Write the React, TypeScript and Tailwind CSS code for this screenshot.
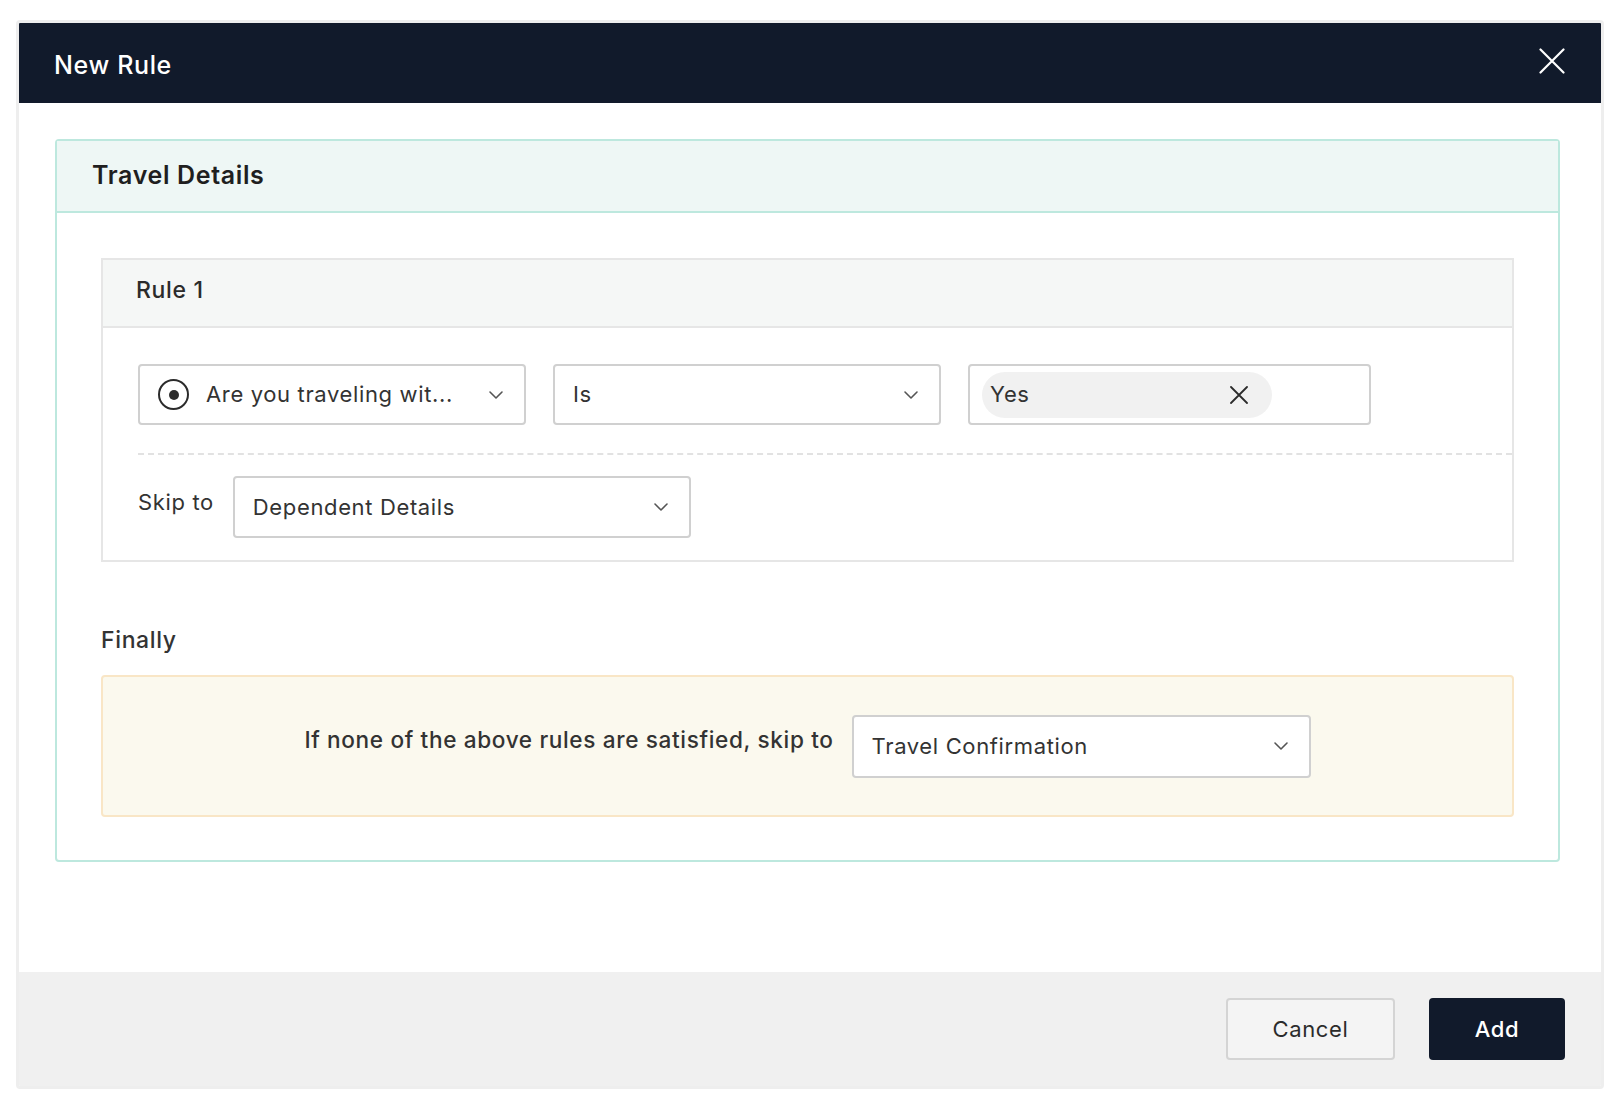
import React from 'react';

const Chevron: React.FC = () => (
  <svg width="16" height="10" viewBox="0 0 16 10" fill="none" className="shrink-0">
    <path d="M2 2l6 6 6-6" stroke="#555555" strokeWidth="1.6" strokeLinecap="round" strokeLinejoin="round" />
  </svg>
);

const SelectBox: React.FC<{ className?: string; children: React.ReactNode }> = ({ className, children }) => (
  <div
    className={`flex items-center justify-between border-2 border-[#d0d0d0] rounded-[4px] bg-white pl-[18px] pr-[20px] ${className ?? ''}`}
  >
    {children}
    <Chevron />
  </div>
);

const App: React.FC = () => {
  return (
    <div className="min-h-screen bg-white pt-[20px] pl-[16px] font-['Inter','Noto_Sans',sans-serif] tracking-[0.04em] text-[#2b2b2b]">
      <div className="w-[1588px] border-[3px] border-[#eeeeee] rounded-[4px] bg-white overflow-hidden">
        {/* Header */}
        <div className="h-[80px] bg-[#111a2b] flex items-center justify-between pl-[35px] pr-[36px]">
          <span className="text-white text-[25px] font-medium mt-[6px]">New Rule</span>
          <svg width="26" height="26" viewBox="0 0 26 26" fill="none" className="-mt-[4px]">
            <path d="M1.5 1.5l23 23M24.5 1.5l-23 23" stroke="#ffffff" strokeWidth="2.2" strokeLinecap="round" />
          </svg>
        </div>

        {/* Body */}
        <div className="h-[869px] pt-[36px] pl-[36px]">
          <div className="w-[1505px] border-2 border-[#bde8de] rounded-[4px]">
            <div className="h-[72px] bg-[#eef7f5] border-b-2 border-[#bde8de] flex items-center pl-[35px]">
              <span className="text-[25px] font-semibold text-[#1f1f1f]">Travel Details</span>
            </div>

            <div className="px-[44px] pt-[45px] pb-[43px]">
              {/* Rule 1 */}
              <div className="border-2 border-[#e6e6e6]">
                <div className="h-[68px] bg-[#f5f7f6] border-b-2 border-[#e6e6e6] flex items-center pl-[33px] pb-[5px]">
                  <span className="text-[23px] font-medium text-[#2b2b2b]">Rule 1</span>
                </div>
                <div className="pl-[35px] pt-[36px] pb-[22px]">
                  <div className="flex gap-[27px]">
                    <SelectBox className="w-[388px] h-[61px]">
                      <div className="flex items-center gap-[17px]">
                        <div className="w-[31px] h-[31px] rounded-full border-2 border-[#2b2b2b] flex items-center justify-center">
                          <div className="w-[10px] h-[10px] rounded-full bg-[#2b2b2b]" />
                        </div>
                        <span className="text-[22px] text-[#333333]">Are you traveling wit...</span>
                      </div>
                    </SelectBox>
                    <SelectBox className="w-[388px] h-[61px]">
                      <span className="text-[22px] text-[#333333]">Is</span>
                    </SelectBox>
                    <div className="w-[403px] h-[61px] border-2 border-[#d0d0d0] rounded-[4px] bg-white flex items-center pl-[12px]">
                      <div className="w-[290px] h-[46px] rounded-full bg-[#f1f1f1] flex items-center justify-between pl-[8px] pr-[24px]">
                        <span className="text-[22px] text-[#333333]">Yes</span>
                        <svg width="18" height="18" viewBox="0 0 18 18" fill="none">
                          <path d="M1 1l16 16M17 1L1 17" stroke="#2b2b2b" strokeWidth="1.8" strokeLinecap="round" />
                        </svg>
                      </div>
                    </div>
                  </div>

                  <div className="mt-[28px] border-t-2 border-dashed border-[#e2e2e2]" />

                  <div className="mt-[21px] flex items-center gap-[19px]">
                    <span className="text-[22px] text-[#333333] pb-[10px]">Skip to</span>
                    <SelectBox className="w-[458px] h-[62px]">
                      <span className="text-[22px] text-[#333333]">Dependent Details</span>
                    </SelectBox>
                  </div>
                </div>
              </div>

              {/* Finally */}
              <div className="mt-[63px] text-[23px] font-medium text-[#333333] leading-[30px]">Finally</div>
              <div className="mt-[20px] h-[142px] bg-[#fbf9ee] border-2 border-[#f9e6c6] rounded-[4px] flex items-center justify-center gap-[18px]">
                <span className="text-[22.6px] font-medium text-[#333333] pb-[12px]">
                  If none of the above rules are satisfied, skip to
                </span>
                <SelectBox className="w-[459px] h-[63px]">
                  <span className="text-[22px] text-[#333333]">Travel Confirmation</span>
                </SelectBox>
              </div>
            </div>
          </div>
        </div>

        {/* Footer */}
        <div className="h-[114px] bg-[#f0f0f0] flex items-center justify-end gap-[34px] pr-[36px]">
          <button className="w-[169px] h-[62px] border-2 border-[#d4d4d4] bg-[#f4f4f4] rounded-[4px] text-[22px] text-[#2b2b2b]">
            Cancel
          </button>
          <button className="w-[136px] h-[62px] bg-[#111a2b] rounded-[4px] text-[22px] font-medium text-white">
            Add
          </button>
        </div>
      </div>
    </div>
  );
};

export default App;
